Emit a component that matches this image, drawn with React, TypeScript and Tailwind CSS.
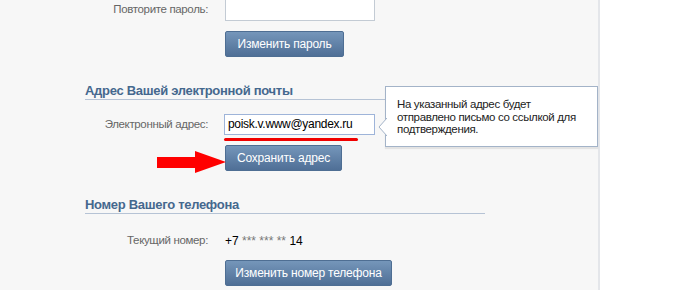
import React from "react";

const font = { fontFamily: '"Liberation Sans", Arial, sans-serif' };

function VkButton({ children, w }: { children: React.ReactNode; w: string }) {
  return (
    <button
      className={`h-[26px] ${w} rounded-[2px] border border-[#4e6e93] bg-gradient-to-b from-[#7596ba] to-[#4f6f96] text-[12px] tracking-[-0.2px] text-white leading-[24px] text-center`}
    >
      {children}
    </button>
  );
}

const label = "w-[208px] text-right text-[11.5px] tracking-[-0.35px] text-[#666]";

export default function App() {
  return (
    <div className="w-[690px] h-[290px] flex overflow-hidden bg-white text-[#222]" style={font}>
      <div className="relative w-[600px] h-full bg-[#f7f7f7] border-r-2 border-[#e4e6ea] flex flex-col">
        {/* Row: repeat password */}
        <div className="flex items-center gap-[17px] mt-[-1px]">
          <div className={label}>Повторите пароль:</div>
          <div className="w-[150px] h-[22px] bg-white border border-[#c3cbd4]" />
        </div>
        <div className="ml-[225px] mt-[10px]">
          <VkButton w="w-[119px]">Изменить пароль</VkButton>
        </div>

        {/* Email heading */}
        <div className="ml-[85px] w-[400px] mt-[26px] text-[13px] tracking-[-0.3px] leading-[16px] font-bold text-[#45688e] border-b border-[#b6c3d5]">
          Адрес Вашей электронной почты
        </div>

        {/* Email row */}
        <div className="relative flex items-center gap-[16px] mt-[14px]">
          <div className={label}>Электронный адрес:</div>
          <div className="w-[151px] h-[21px] bg-white border border-[#9eb4d9] text-[12px] tracking-[-0.3px] leading-[19px] pl-[3px] text-black">
            poisk.v.www@yandex.ru
          </div>
          <div className="absolute left-[224px] top-[24px] w-[134px] h-[3px] rounded-full bg-[#f00000]" />
        </div>
        <div className="ml-[225px] mt-[10px]">
          <VkButton w="w-[117px]">Сохранить адрес</VkButton>
        </div>

        {/* Phone heading */}
        <div className="ml-[85px] w-[400px] mt-[26px] text-[13px] tracking-[-0.3px] leading-[16px] font-bold text-[#45688e] border-b border-[#b6c3d5]">
          Номер Вашего телефона
        </div>

        {/* Phone row */}
        <div className="flex items-center gap-[17px] mt-[19px] h-[16px]">
          <div className={label}>Текущий номер:</div>
          <div className="text-[12px] text-black">
            +7 <span className="text-[#777]">*** *** **</span> 14
          </div>
        </div>
        <div className="ml-[225px] mt-[11px]">
          <VkButton w="w-[167px]">Изменить номер телефона</VkButton>
        </div>

        {/* Red arrow annotation */}
        <svg className="absolute left-[156px] top-[151px]" width="72" height="23" viewBox="0 0 72 23">
          <polygon points="1,6 39,6 39,0 70,11 39,22 39,17 1,17" fill="#ff0000" />
        </svg>

        {/* Tooltip */}
        <div className="absolute left-[385px] top-[86px] w-[213px] h-[61px] bg-white border border-[#a3b3c8] shadow-[0_2px_1px_rgba(0,0,0,0.08)] pl-[11px] pt-[11px] text-[11.5px] tracking-[-0.35px] leading-[12.5px] text-[#222]">
          <div>На указанный адрес будет</div>
          <div>отправлено письмо со ссылкой для</div>
          <div>подтверждения.</div>
          <svg className="absolute left-[-8px] top-[31px]" width="9" height="18" viewBox="0 0 9 18">
            <polygon points="9,0 1,9 9,18" fill="#ffffff" />
            <polyline points="9,0 1,9 9,18" fill="none" stroke="#a3b3c8" strokeWidth="1" />
          </svg>
        </div>
      </div>
    </div>
  );
}
